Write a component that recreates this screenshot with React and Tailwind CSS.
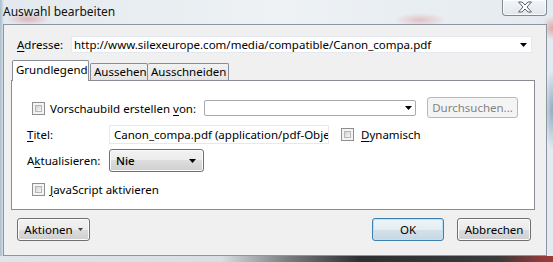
import React from 'react';

// Win7 style "Auswahl bearbeiten" dialog

function Caret({ small = false, color = '#000' }) {
  if (small) {
    return (
      <svg width="5" height="3" viewBox="0 0 5 3">
        <path d="M0 0h5L2.5 3z" fill={color} />
      </svg>
    );
  }
  return (
    <svg width="7" height="4" viewBox="0 0 7 4">
      <path d="M0 0h7L3.5 4z" fill={color} />
    </svg>
  );
}

function CheckBox() {
  return (
    <span className="block w-[13px] h-[13px] shrink-0 border border-[#8f8f8f] bg-[#f4f4f4] p-[2px]">
      <span className="block w-full h-full border border-[#b4b8bc] bg-[linear-gradient(135deg,#cfd1d3,#f7f7f7)]" />
    </span>
  );
}

function U({ children }) {
  return <span className="underline underline-offset-2">{children}</span>;
}

const btn =
  'flex items-center justify-center rounded-[3px] border border-[#707070] shadow-[inset_0_0_0_1px_#fbfbfb] bg-[linear-gradient(to_bottom,#f2f2f2_0%,#ebebeb_50%,#dddddd_50%,#cfcfcf_100%)]';

export default function App() {
  return (
    <div className="w-[553px] h-[262px] overflow-hidden flex flex-col font-['Noto_Sans',sans-serif] text-[11.5px] leading-[16px] text-black bg-[radial-gradient(ellipse_22px_6px_at_28px_19px,rgba(205,80,80,0.35),transparent),radial-gradient(ellipse_26px_7px_at_420px_20px,rgba(215,90,90,0.3),transparent),radial-gradient(ellipse_10px_12px_at_552px_28px,rgba(220,90,90,0.45),transparent),radial-gradient(ellipse_8px_40px_at_552px_110px,rgba(70,110,150,0.5),transparent),linear-gradient(to_right,#a9bccb_0px,#e3e9ee_4px,#eef2f5_50%,#e4eaef_100%)]">
      {/* title bar */}
      <div className="h-[24px] flex items-start shrink-0">
        <span className="pl-[3px] pt-[4px] text-[12px] text-[#111]">Auswahl bearbeiten</span>
        <div className="ml-auto mr-[6px] w-[45px] h-[16px] border border-t-0 border-[#7f8a95] rounded-b-[4px] shadow-[inset_0_0_0_1px_rgba(255,255,255,0.7)] bg-[linear-gradient(to_bottom,rgba(255,255,255,0.55),rgba(220,228,235,0.6))] flex items-start justify-center pt-[1px]">
          <svg width="16" height="12" viewBox="0 0 16 12">
            <path
              d="M1.5 1h3.5l3 3 3-3h3.5L10 6l4.5 5H11L8 8l-3 3H1.5L6 6z"
              fill="#ffffff"
              stroke="#5b646e"
              strokeWidth="1"
              strokeLinejoin="round"
            />
          </svg>
        </div>
      </div>

      {/* client area */}
      <div className="ml-[3px] w-[544px] h-[232px] shrink-0 border border-[#8b96a1] bg-[#f0f0f0] flex flex-col">
        {/* Adresse */}
        <div className="mt-[11px] h-[17px] flex items-center">
          <span className="ml-[13px] w-[54px]">
            <U>A</U>dresse:
          </span>
          <div className="w-[461px] h-[17px] bg-white border border-[#e3e9ef] flex items-center justify-between pl-[2px] pr-[4px]">
            <span className="whitespace-nowrap">http://www.silexeurope.com/media/compatible/Canon_compa.pdf</span>
            <Caret />
          </div>
        </div>

        {/* tabs */}
        <div className="mt-[7px] ml-[8px] h-[21px] flex items-end">
          <div className="relative z-10 w-[77px] h-[21px] border border-b-0 border-[#898c95] bg-white pl-[3px] pt-[1px] rounded-t-[2px] whitespace-nowrap">
            Grundlegend
          </div>
          <div className="ml-[1px] w-[58px] h-[18px] border border-b-0 border-[#898c95] rounded-t-[2px] bg-[linear-gradient(to_bottom,#f2f2f2,#e3e3e3)] pl-[3px] whitespace-nowrap">
            Aussehen
          </div>
          <div className="w-[81px] h-[18px] border border-b-0 border-l-0 border-[#898c95] rounded-t-[2px] bg-[linear-gradient(to_bottom,#f2f2f2,#e3e3e3)] pl-[3px] whitespace-nowrap">
            Ausschneiden
          </div>
        </div>

        {/* panel */}
        <div className="-mt-[1px] ml-[7px] w-[524px] h-[130px] border border-[#898c95] bg-white flex flex-col">
          <div className="mt-[16px] h-[21px] flex items-center">
            <span className="ml-[20px] mt-[2px]">
              <CheckBox />
            </span>
            <span className="ml-[5px] w-[154px] mt-[2px]">
              Vorschaubild erstellen <U>v</U>on:
            </span>
            <div className="w-[212px] h-[16px] bg-white border border-[#a7abb0] rounded-[2px] flex items-center justify-end pr-[3px]">
              <Caret />
            </div>
            <div className="ml-[11px] w-[91px] h-[21px] rounded-[3px] border border-[#b5b9bc] bg-[#f4f4f4] text-[#838383] flex items-center justify-center">
              Durchsuchen...
            </div>
          </div>

          <div className="mt-[7px] h-[19px] flex items-center">
            <span className="ml-[15px] w-[82px]">
              <U>T</U>itel:
            </span>
            <div className="w-[220px] h-[19px] bg-white border border-[#e3e9ef] overflow-hidden whitespace-nowrap pl-[4px] flex items-center">
              Canon_compa.pdf (application/pdf-Objekt)
            </div>
            <span className="ml-[12px]">
              <CheckBox />
            </span>
            <span className="ml-[7px]">
              <U>D</U>ynamisch
            </span>
          </div>

          <div className="mt-[5px] h-[23px] flex items-center">
            <span className="ml-[15px] w-[82px]">
              A<U>k</U>tualisieren:
            </span>
            <div className={`${btn} w-[95px] h-[23px] !justify-between pl-[6px] pr-[7px]`}>
              <span className="font-medium">Nie</span>
              <Caret />
            </div>
          </div>

          <div className="mt-[11px] h-[13px] flex items-center">
            <span className="ml-[20px]">
              <CheckBox />
            </span>
            <span className="ml-[5px]">
              <U>J</U>avaScript aktivieren
            </span>
          </div>
        </div>

        {/* bottom buttons */}
        <div className="mt-[8px] h-[23px] flex items-center">
          <div className={`${btn} ml-[13px] w-[73px] h-[23px] gap-[5px]`}>
            <span>Aktionen</span>
            <Caret small color="#444" />
          </div>
          <div className="ml-auto w-[72px] h-[23px] rounded-[3px] border border-[#3c7fb1] shadow-[inset_0_0_0_1px_#b9e3f6] bg-[linear-gradient(to_bottom,#eef4f8_0%,#e4edf3_50%,#d3e1ea_50%,#c8d8e3_100%)] flex items-center justify-center">
            OK
          </div>
          <div className={`${btn} ml-[13px] mr-[15px] w-[74px] h-[23px]`}>Abbrechen</div>
        </div>
      </div>

      {/* bottom frame edge */}
      <div className="flex-1 bg-[linear-gradient(to_right,#dfe5ea_0%,#d8dee3_40%,#7a7c7e_52%,#2e2f30_65%,#3a3a3a_90%,#9a3a3a_99%)]" />
    </div>
  );
}
